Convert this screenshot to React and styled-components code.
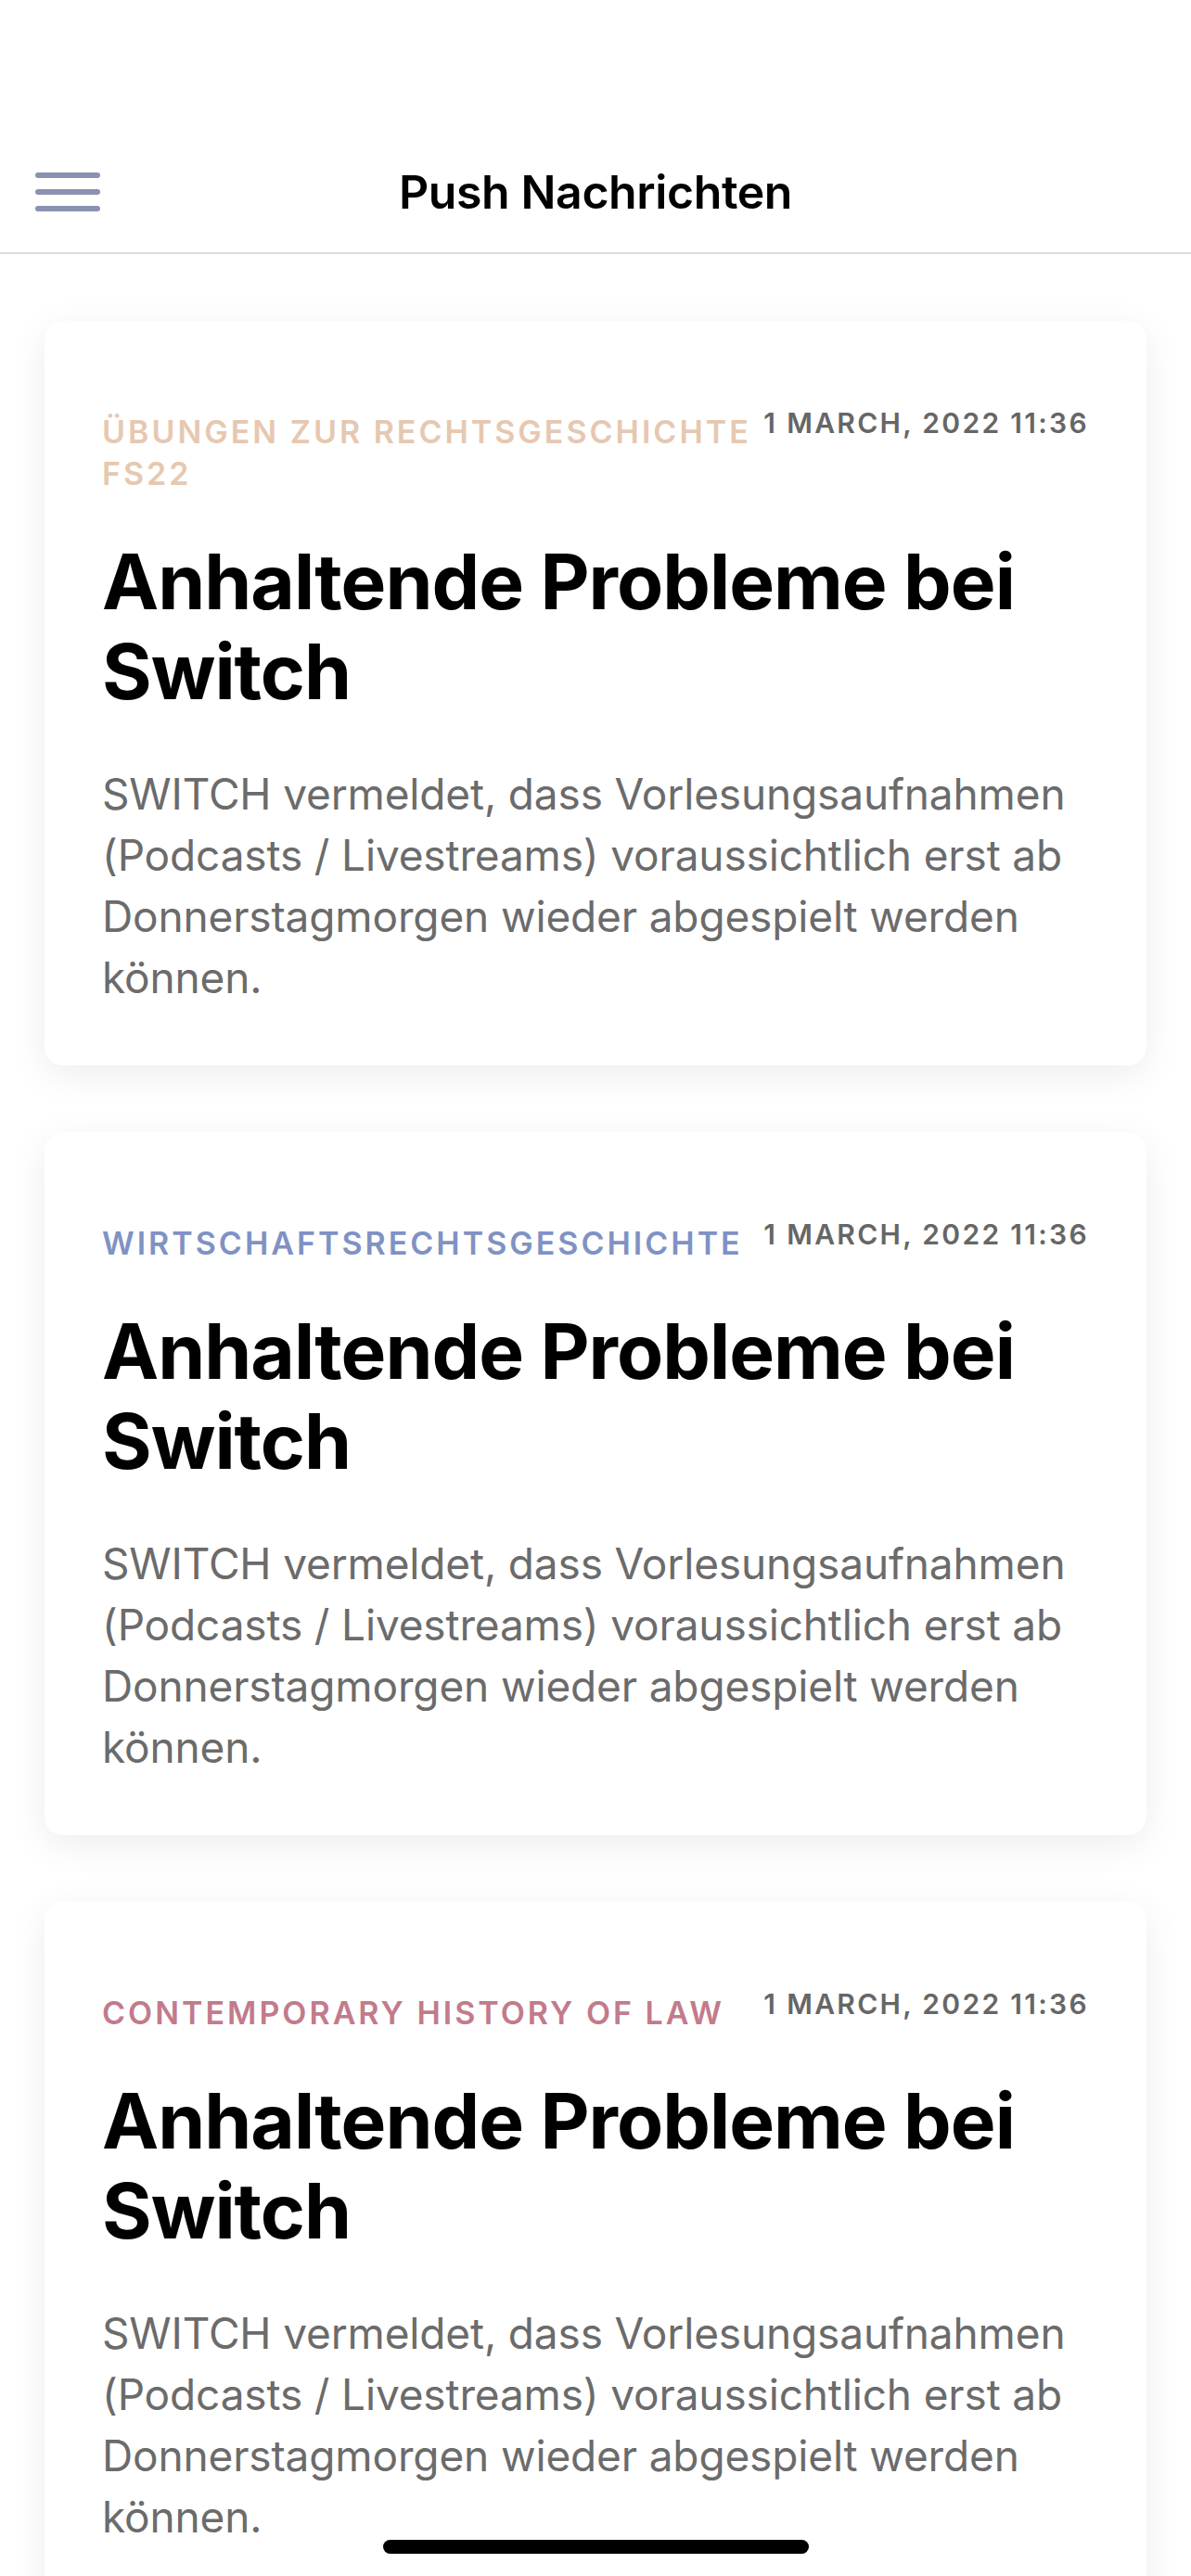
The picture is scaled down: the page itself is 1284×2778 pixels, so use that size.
import React from "react";
import styled, { createGlobalStyle } from "styled-components";

const GlobalStyle = createGlobalStyle`
  * { box-sizing: border-box; }
  html, body {
    margin: 0;
    padding: 0;
    background: #ffffff;
    font-family: Inter, "Noto Sans", "Liberation Sans", sans-serif;
    -webkit-font-smoothing: antialiased;
  }
`;

const Screen = styled.div`
  height: 100vh;
  overflow: hidden;
  background: #ffffff;
`;

const Header = styled.header`
  display: grid;
  grid-template-columns: 1fr auto 1fr;
  align-items: center;
  height: 274px;
  padding: 142px 38px 0;
  border-bottom: 2px solid #dcdcdc;
`;

const MenuButton = styled.button`
  justify-self: start;
  display: flex;
  flex-direction: column;
  gap: 12px;
  width: 70px;
  padding: 0;
  border: none;
  background: none;
`;

const MenuLine = styled.span`
  display: block;
  height: 6px;
  border-radius: 3px;
  background: #8a92b2;
`;

const Title = styled.h1`
  margin: 0;
  font-size: 50px;
  line-height: 60px;
  font-weight: 600;
  color: #000;
  letter-spacing: -0.4px;
`;

const List = styled.main`
  display: flex;
  flex-direction: column;
  gap: 72px;
  padding: 72px 48px;
`;

const Card = styled.article`
  background: #fff;
  border-radius: 20px;
  padding: 97px 62px 62px;
  box-shadow: 0 10px 40px rgba(0, 0, 0, 0.075);
`;

const Meta = styled.div`
  display: flex;
  align-items: flex-start;
  gap: 10px;
`;

const Category = styled.span`
  flex: 1;
  font-size: 34px;
  line-height: 45px;
  font-weight: 600;
  letter-spacing: 3px;
  text-transform: uppercase;
  color: ${(p) => p.$color};
`;

const Date = styled.span`
  flex: none;
  margin-top: -2px;
  font-size: 30px;
  line-height: 30px;
  font-weight: 600;
  letter-spacing: 2.3px;
  text-transform: uppercase;
  color: #666;
`;

const Headline = styled.h2`
  margin: 46px 0 0;
  font-size: 82px;
  line-height: 97px;
  font-weight: 700;
  letter-spacing: -1px;
  color: #000;
`;

const Body = styled.p`
  margin: 50px 0 0;
  font-size: 46px;
  line-height: 66px;
  font-weight: 400;
  letter-spacing: -0.15px;
  color: #6b6b6b;
`;

const HomeIndicator = styled.div`
  position: fixed;
  left: 50%;
  bottom: 24px;
  width: 459px;
  height: 15px;
  margin-left: -229px;
  border-radius: 8px;
  background: #000;
`;

const messages = [
  { id: 1, category: "Übungen zur Rechtsgeschichte FS22", color: "#e6c8b1" },
  { id: 2, category: "Wirtschaftsrechtsgeschichte", color: "#7f92c4" },
  { id: 3, category: "Contemporary History of Law", color: "#c27b8c" },
];

export default function App() {
  return (
    <Screen>
      <GlobalStyle />
      <Header>
        <MenuButton aria-label="Menü">
          <MenuLine />
          <MenuLine />
          <MenuLine />
        </MenuButton>
        <Title>Push Nachrichten</Title>
        <span />
      </Header>
      <List>
        {messages.map((item) => (
          <Card key={item.id}>
            <Meta>
              <Category $color={item.color}>{item.category}</Category>
              <Date>1 March, 2022 11:36</Date>
            </Meta>
            <Headline>Anhaltende Probleme bei Switch</Headline>
            <Body>
              SWITCH vermeldet, dass Vorlesungsaufnahmen (Podcasts / Livestreams)
              voraussichtlich erst ab Donnerstagmorgen wieder abgespielt werden können.
            </Body>
          </Card>
        ))}
      </List>
      <HomeIndicator />
    </Screen>
  );
}
